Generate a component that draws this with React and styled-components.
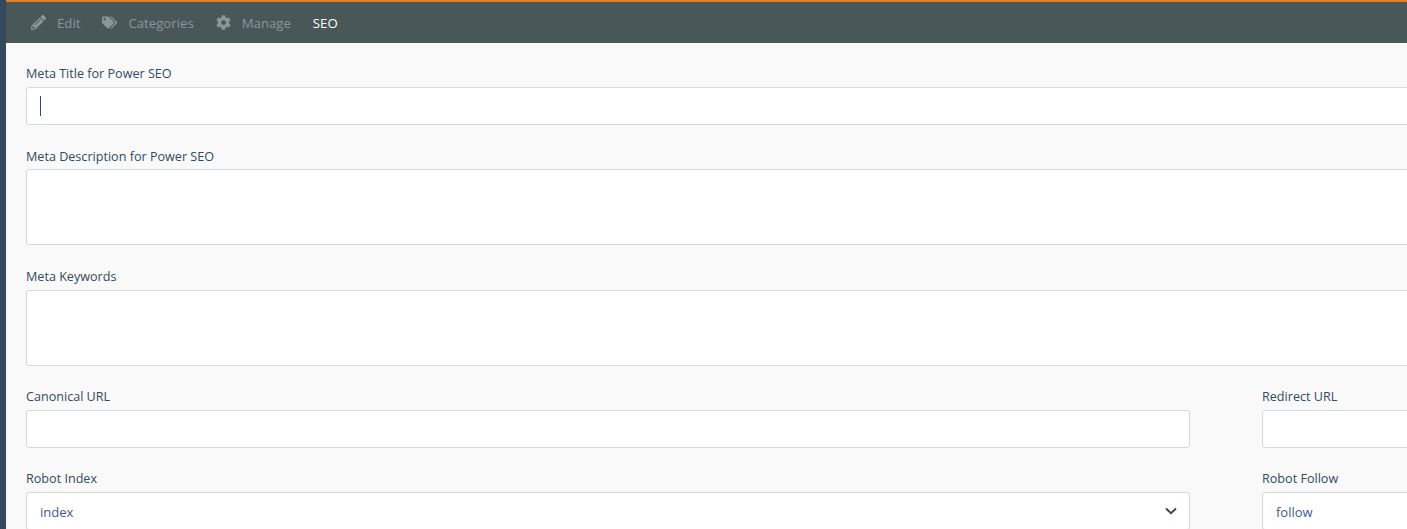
import React from "react";
import styled, { createGlobalStyle } from "styled-components";
import { FaPencilAlt, FaTags, FaCog } from "react-icons/fa";

const GlobalStyle = createGlobalStyle`
  html, body {
    margin: 0;
    height: 100%;
    overflow: hidden;
    background: #f9f9f9;
  }
  * {
    box-sizing: border-box;
  }
`;

const Page = styled.div`
  display: flex;
  width: 1407px;
  height: 529px;
  overflow: hidden;
  font-family: "Open Sans", "Noto Sans", sans-serif;
`;

const Sidebar = styled.div`
  flex: 0 0 6px;
  background: #34495e;
`;

const Main = styled.div`
  flex: 1;
  min-width: 0;
  overflow: hidden;
`;

const TabBar = styled.nav`
  display: flex;
  align-items: center;
  height: 43px;
  padding-left: 25px;
  gap: 22px;
  background: #4a5759;
  border-top: 2px solid #e67e22;
`;

const Tab = styled.div`
  display: flex;
  align-items: center;
  gap: 11px;
  font-size: 13.2px;
  color: ${(props) => (props.$active ? "#ffffff" : "#8b9698")};

  svg {
    font-size: 15px;
    color: #8b9698;
  }
`;

const Form = styled.div`
  width: 1420px;
  padding: 23px 0 0 20px;
`;

const Field = styled.div`
  margin-bottom: ${(props) => props.$gap || 23}px;
`;

const Label = styled.label`
  display: block;
  height: 14px;
  margin-bottom: ${(props) => props.$after || 7}px;
  font-size: 12.6px;
  line-height: 16px;
  color: #34495e;
`;

const Box = styled.div`
  display: flex;
  align-items: center;
  justify-content: space-between;
  height: ${(props) => props.$height || 38}px;
  padding: 2px 12px 0 13px;
  background: #ffffff;
  border: 1px solid #d4d9dc;
  border-radius: 3px;
  font-size: 13px;
  color: #3f5a92;
`;

const Caret = styled.span`
  width: 1px;
  height: 20px;
  margin-top: -2px;
  background: #2a4a85;
`;

const Chevron = styled.svg`
  width: 12px;
  height: 8px;
  margin-top: -3px;
  fill: none;
  stroke: #34495e;
  stroke-width: 2;
`;

const Columns = styled.div`
  display: grid;
  grid-template-columns: 1164px 1164px;
  column-gap: 72px;
`;

export default function App() {
  return (
    <Page>
      <GlobalStyle />
      <Sidebar />
      <Main>
        <TabBar>
          <Tab>
            <FaPencilAlt />
            Edit
          </Tab>
          <Tab>
            <FaTags />
            Categories
          </Tab>
          <Tab>
            <FaCog />
            Manage
          </Tab>
          <Tab $active>SEO</Tab>
        </TabBar>
        <Form>
          <Field $gap={24}>
            <Label>Meta Title for Power SEO</Label>
            <Box>
              <Caret />
            </Box>
          </Field>
          <Field $gap={24}>
            <Label $after={6}>Meta Description for Power SEO</Label>
            <Box $height={76} />
          </Field>
          <Field>
            <Label>Meta Keywords</Label>
            <Box $height={76} />
          </Field>
          <Columns>
            <Field>
              <Label>Canonical URL</Label>
              <Box />
            </Field>
            <Field>
              <Label>Redirect URL</Label>
              <Box />
            </Field>
            <Field>
              <Label>Robot Index</Label>
              <Box>
                index
                <Chevron viewBox="0 0 12 8">
                  <path d="M1 1.5 L6 6.2 L11 1.5" />
                </Chevron>
              </Box>
            </Field>
            <Field>
              <Label>Robot Follow</Label>
              <Box>follow</Box>
            </Field>
          </Columns>
        </Form>
      </Main>
    </Page>
  );
}
